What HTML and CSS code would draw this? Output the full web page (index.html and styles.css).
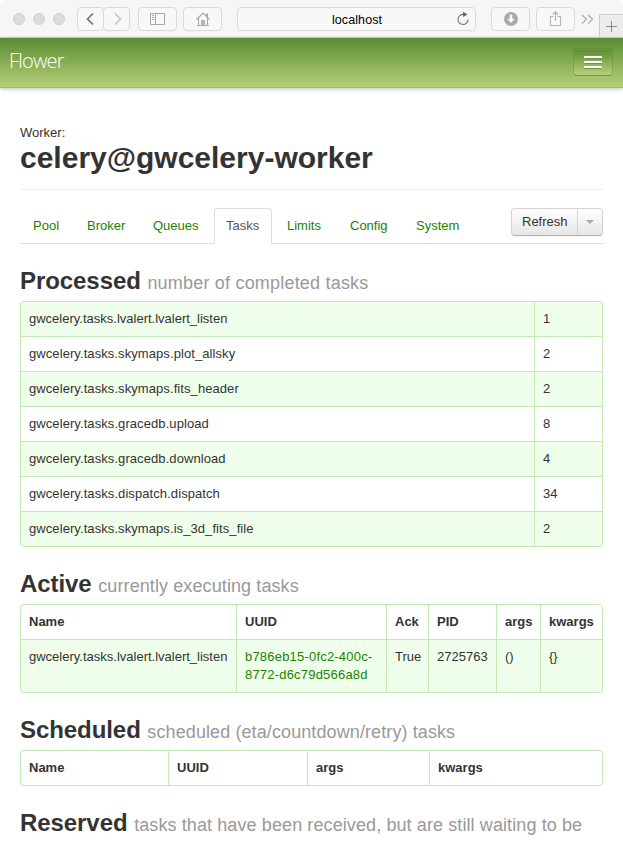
FILE: index.html
```html
<!DOCTYPE html>
<html lang="en">
<head>
<meta charset="utf-8">
<title>Flower</title>
<link rel="stylesheet" href="styles.css">
</head>
<body>
<header class="toolbar">
  <div class="lights"><i></i><i></i><i></i></div>
  <div class="history">
    <span class="tool"><svg width="26" height="22" viewBox="0 0 26 22"><path d="M15 5.500 9.500 11 15 16.500" stroke="#737373" stroke-width="1.700"/></svg></span>
    <span class="tool"><svg width="26" height="22" viewBox="0 0 26 22"><path d="M11 5.500 16.500 11 11 16.500" stroke="#c2c2c2" stroke-width="1.500"/></svg></span>
  </div>
  <span class="tool sidebar"><svg width="37" height="22" viewBox="0 0 37 22"><path d="M11.500 5.500h14v11h-14zM16.500 5.500v11M13 7.500h2M13 9.500h2M13 11.500h2" stroke="#a6a6a6"/></svg></span>
  <span class="tool home"><svg width="37" height="22" viewBox="0 0 37 22"><path d="M12.500 11.500 19 5l6.500 6.500M14.500 10v7.500M23.500 10v7.500M13 17.500h12M22.500 8V6h1v3" stroke="#a9a9a9" stroke-width="1.100"/><path d="M17 12h4v5.500h-4z" fill="#b4b4b4"/></svg></span>
  <div class="address"><span>localhost</span><svg width="14" height="16" viewBox="0 0 14 16"><path d="M7.500 3.500A5 5 0 1 0 12 8.500" stroke="#777" stroke-width="1.200"/><path d="m7 .8 4.500 2.700L7 6z" fill="#666"/></svg></div>
  <span class="tool download"><svg width="37" height="22" viewBox="0 0 37 22"><circle cx="19" cy="11" r="7" fill="#aaa"/><path d="M17.800 6.500h2.400v4.300h2.500L19 15l-3.700-4.200h2.500z" fill="#f8f8f8"/></svg></span>
  <span class="tool share"><svg width="37" height="22" viewBox="0 0 37 22"><path d="M16.500 8.500h-3v9h10v-9h-3M18.500 13V3.800M15.700 6.600l2.800-2.800 2.800 2.800" stroke="#b3b3b3" stroke-width="1.100"/></svg></span>
  <svg class="more" width="13" height="12" viewBox="0 0 13 12"><path d="m1 2 4.500 4.300L1 10.600M7 2l4.500 4.300L7 10.600" stroke="#a9a9a9" stroke-width="1.200"/></svg>
  <span class="newtab"><svg width="23" height="23" viewBox="0 0 23 23"><path d="M6 11.500h11M11.500 6v11" stroke="#888"/></svg></span>
</header>
<nav class="navbar">
  <a class="brand">Flower</a>
  <div class="menu"><i></i><i></i><i></i></div>
</nav>
<main>
  <p class="label">Worker:</p>
  <h1><span>celery@gwcelery-worker</span></h1>
  <div class="tabs">
    <a class="pool">Pool</a><a class="broker">Broker</a><a class="queues">Queues</a><a class="active">Tasks</a><a class="limits">Limits</a><a class="config">Config</a><a class="system">System</a>
    <div class="refresh"><span>Refresh</span><b></b></div>
  </div>

  <h2><span>Processed</span> <small class="wide">number of completed tasks</small></h2>
  <table>
    <colgroup><col><col class="count"></colgroup>
    <tbody class="odd counts">
      <tr><td>gwcelery.tasks.lvalert.lvalert_listen</td><td>1</td></tr>
      <tr><td>gwcelery.tasks.skymaps.plot_allsky</td><td>2</td></tr>
      <tr><td>gwcelery.tasks.skymaps.fits_header</td><td>2</td></tr>
      <tr><td>gwcelery.tasks.gracedb.upload</td><td>8</td></tr>
      <tr><td>gwcelery.tasks.gracedb.download</td><td>4</td></tr>
      <tr><td>gwcelery.tasks.dispatch.dispatch</td><td>34</td></tr>
      <tr><td>gwcelery.tasks.skymaps.is_3d_fits_file</td><td>2</td></tr>
    </tbody>
  </table>

  <h2><span>Active</span> <small>currently executing tasks</small></h2>
  <table>
    <colgroup><col class="a-name"><col class="a-uuid"><col class="a-ack"><col class="a-pid"><col class="a-args"><col></colgroup>
    <thead><tr><th>Name</th><th>UUID</th><th>Ack</th><th>PID</th><th>args</th><th>kwargs</th></tr></thead>
    <tbody class="odd"><tr><td>gwcelery.tasks.lvalert.lvalert_listen</td><td><a>b786eb15-0fc2-400c-<br>8772-d6c79d566a8d</a></td><td>True</td><td>2725763</td><td>()</td><td>{}</td></tr></tbody>
  </table>

  <h2><span>Scheduled</span> <small>scheduled (eta/countdown/retry) tasks</small></h2>
  <table>
    <colgroup><col class="s-name"><col class="s-uuid"><col class="s-args"><col></colgroup>
    <thead><tr><th>Name</th><th>UUID</th><th>args</th><th>kwargs</th></tr></thead>
  </table>

  <h2><span>Reserved</span> <small>tasks that have been received, but are still waiting to be</small></h2>
</main>
</body>
</html>
```
FILE: styles.css
```css
* { box-sizing: border-box; }
html, body { height: 841px; overflow: hidden; }
body {
  margin: 0;
  background: #fff;
  color: #333;
  font: 13px/18px "Liberation Sans", Arial, sans-serif;
}
svg { display: block; fill: none; }

.toolbar {
  display: flex;
  align-items: flex-start;
  height: 38px;
  padding: 7px 0 0 13px;
  background: #f6f6f6;
  border-bottom: 1px solid #cfcfcf;
  border-radius: 5px 5px 0 0;
}
.lights { display: flex; gap: 8px; padding-top: 6px; width: 64px; }
.lights i { width: 12px; height: 12px; border-radius: 50%; background: #dcdcdc; border: 1px solid #d0d0d0; }
.history { display: flex; width: 53px; }
.tool { border: 1px solid #dadada; border-radius: 4px; height: 24px; background: #f8f8f8; flex: none; }
.history .tool { width: 27px; overflow: hidden; }
.history .tool + .tool { margin-left: -1px; }
.sidebar, .home, .download, .share { width: 39px; }
.sidebar { margin-left: 8px; }
.home { margin-left: 6px; }
.address {
  display: flex;
  align-items: center;
  width: 239px;
  height: 24px;
  margin-left: 15px;
  border: 1px solid #dadada;
  border-radius: 4px;
  background: #f8f8f8;
  color: #000;
}
.address span { flex: 1; text-align: center; padding: 1px 0 0 20px; font-size: 12.5px; letter-spacing: .1px; }
.address svg { margin-right: 5px; flex: none; }
.download { margin-left: 15px; }
.share { margin-left: 6px; }
.more { margin: 6px 0 0 6px; flex: none; }
.newtab { width: 24px; height: 23px; margin: 7px 0 0 auto; background: #ececec; border: 1px solid #cfcfcf; border-width: 1px 0 0 1px; flex: none; }

.navbar {
  display: flex;
  justify-content: space-between;
  height: 50px;
  padding: 10px 10px 0 9px;
  background: linear-gradient(#5a8c32, #b5d077);
  border-bottom: 1px solid #9fbf60;
  box-shadow: 0 1px 4px rgba(0, 0, 0, .25);
}
.brand { color: #fff; font: 300 20px/26px "Open Sans", sans-serif; letter-spacing: -.8px; }
.menu {
  display: flex;
  flex-direction: column;
  align-items: center;
  gap: 2px;
  width: 40px;
  height: 28px;
  padding-top: 7px;
  border: 1px solid rgba(0, 0, 0, .1);
  border-bottom-color: rgba(0, 0, 0, .25);
  border-radius: 4px;
  background: linear-gradient(#5a8c32, #b5d077) padding-box;
  box-shadow: inset 0 1px 0 rgba(255, 255, 255, .1), 0 1px 0 rgba(255, 255, 255, .08);
}
.menu i { width: 18px; height: 3px; background: #fff; border-bottom: 1px solid #70924a; border-radius: 1px; }

main { padding: 36px 20px 0; white-space: nowrap; }
.label { margin: 0; }
h1 { margin: 0; height: 48px; border-bottom: 1px solid #eee; font-size: 30px; line-height: 32px; }

.tabs { display: flex; align-items: flex-start; height: 36px; margin-top: 18px; border-bottom: 1px solid #ddd; }
.tabs a { height: 36px; padding: 8px 12px; border: 1px solid transparent; margin-right: 2px; color: #238200; line-height: 18px; }
.tabs .pool { width: 52px; }
.tabs .broker { width: 65px; }
.tabs .queues { width: 71px; padding-left: 11px; }
.tabs .active { width: 58px; padding: 8px 0 8px 11px; border: 1px solid #ddd; border-bottom-color: #fff; border-radius: 4px 4px 0 0; background: #fff; color: #555; }
.tabs .limits { width: 61px; }
.tabs .config { width: 64px; }
.refresh {
  display: flex;
  width: 92px;
  height: 28px;
  margin-left: auto;
  border: 1px solid #d3d3d3;
  border-bottom-color: #b3b3b3;
  border-radius: 4px;
  background: linear-gradient(#fff, #e6e6e6);
  box-shadow: 0 1px 2px rgba(0, 0, 0, .05);
}
.refresh span { width: 66px; padding: 4px 0 0 10px; border-right: 1px solid #d3d3d3; }
.refresh b { width: 0; height: 0; margin: 11px 0 0 8px; border: 4px solid transparent; border-top-color: #aaa; border-bottom: 0; }

h2 { margin: 0; height: 57px; padding-top: 19px; font-size: 24px; line-height: 36px; letter-spacing: -.07px; }
h2 small { color: #999; font-size: 18px; font-weight: 400; letter-spacing: .1px; }
h2 .wide { letter-spacing: .2px; }
table {
  width: 583px;
  border: 1px solid #c3eab4;
  border-left: 0;
  border-radius: 4px;
  border-spacing: 0;
  table-layout: fixed;
}
th, td { padding: 8px; border: 0 solid #c3eab4; border-left-width: 1px; text-align: left; vertical-align: top; font-size: 13px; line-height: 18px; }
tr + tr td, thead + tbody td { border-top-width: 1px; }
.odd tr:nth-child(odd) td { background: #efffeb; }
.counts tr + tr td { letter-spacing: .08px; }
td a { color: #238200; letter-spacing: .2px; }
tbody:nth-child(2) tr:first-child > :first-child, thead th:first-child { border-top-left-radius: 4px; }
tbody tr:last-child > :first-child, thead:last-child th:first-child { border-bottom-left-radius: 4px; }
thead + tbody tr:first-child > :first-child { border-top-left-radius: 0; }
.counts tr:first-child > :last-child { border-top-right-radius: 3px; }
tbody tr:last-child > :last-child { border-bottom-right-radius: 3px; }
.count { width: 68px; }
.a-name { width: 216px; }
.a-uuid { width: 150px; }
.a-ack { width: 42px; }
.a-pid { width: 68px; }
.a-args { width: 44px; }
.s-name { width: 148px; }
.s-uuid { width: 139px; }
.s-args { width: 122px; }
```
